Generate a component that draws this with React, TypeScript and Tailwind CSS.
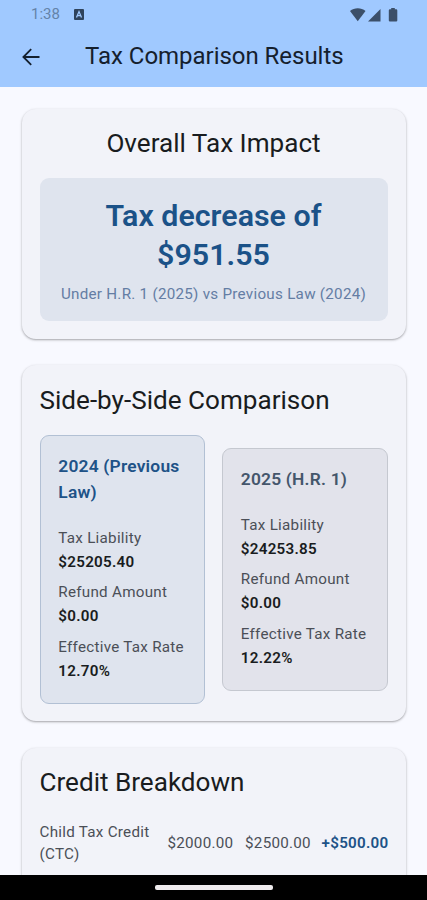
import type { ReactNode } from "react";
import clsx from "clsx";

interface Scenario {
  title: string;
  liability: string;
  refund: string;
  rate: string;
  previous?: boolean;
}

const scenarios: Scenario[] = [
  { title: "2024 (Previous Law)", liability: "$25205.40", refund: "$0.00", rate: "12.70%", previous: true },
  { title: "2025 (H.R. 1)", liability: "$24253.85", refund: "$0.00", rate: "12.22%" },
];

const credits = [
  { name: "Child Tax Credit (CTC)", before: "$2000.00", after: "$2500.00", change: "+$500.00" },
];

const StatusBar = () => (
  <div className="flex h-[29px] items-center justify-between pr-[29px] pl-[31px] text-[#3b4f69]">
    <div className="flex items-center">
      <span className="w-[43px] text-[15px] leading-none text-[#6483a9]">1:38</span>
      <svg width="10" height="11" viewBox="0 0 10 11">
        <rect width="10" height="11" rx="1" fill="#2f435c" />
        <path d="M2.5 8.4 5 2.6l2.5 5.8M3.6 6.7h2.8" fill="none" stroke="#a0c9ff" strokeWidth="1.3" />
      </svg>
    </div>
    <svg width="48" height="14" viewBox="0 0 48 14" fill="currentColor">
      <path d="M0 3.1C4.2-.7 11.3-.7 15.5 3.1L7.75 13.2Z" />
      <path d="M30.5 1V13.5H18Z" />
      <path d="M41.2 0h3.600v1.300h1.400q1.100 0 1.100 1.100v10q0 1.100-1.100 1.100h-6.300q-1.100 0-1.100-1.100v-10q0-1.100 1.100-1.100h1.300Z" />
    </svg>
  </div>
);

const AppBar = () => (
  <div className="flex h-[54px] items-center">
    <svg className="mt-[2px] ml-[22px] w-[18px]" height="18" viewBox="0 0 18 18" fill="none" stroke="#14202e" strokeWidth="1.8">
      <path d="M17.5 9H2M9.2 1.2 1.4 9l7.800 7.800" />
    </svg>
    <h1 className="-mt-px ml-[45px] text-[24px] leading-[30px] tracking-[-0.03px] whitespace-nowrap text-[#15202d]">
      Tax Comparison Results
    </h1>
  </div>
);

const Card = ({ children }: { children: ReactNode }) => (
  <section className="rounded-[14px] bg-[#f2f3f9] px-[18px] py-[17.5px] shadow-[0_1px_2px_rgba(0,0,0,0.28),0_1px_3px_1px_rgba(0,0,0,0.06)]">
    {children}
  </section>
);

const CardTitle = ({ children, center }: { children: ReactNode; center?: boolean }) => (
  <h2 className={clsx("text-[26.1px] leading-[35px] text-[#191c20]", center && "text-center")}>{children}</h2>
);

const Figure = ({ label, value }: { label: string; value: string }) => (
  <div className="py-[4.4px] text-[15.2px] leading-[21.8px] tracking-[0.27px] whitespace-nowrap">
    <div className="text-[#4b4f57]">{label}</div>
    <div className="mt-[2.2px] font-semibold text-[#191c20]">{value}</div>
  </div>
);

const ScenarioBox = ({ title, liability, refund, rate, previous }: Scenario) => (
  <div
    className={clsx(
      "flex-1 rounded-[9px] border pt-[17px] pr-[17px] pb-[15.8px] pl-[17.8px]",
      previous ? "border-[#b2c0d4] bg-[#dfe4ee]" : "border-[#c5c8d0] bg-[#e2e3eb]"
    )}
  >
    <h3
      className={clsx(
        "mb-[18px] text-[17.4px] leading-[26.1px] font-semibold tracking-[0.2px]",
        previous ? "text-[#205287]" : "text-[#44566b]"
      )}
    >
      {title}
    </h3>
    <Figure label="Tax Liability" value={liability} />
    <Figure label="Refund Amount" value={refund} />
    <Figure label="Effective Tax Rate" value={rate} />
  </div>
);

export default function App() {
  return (
    <div className="flex h-[900px] w-[427px] flex-col overflow-hidden bg-[#f8f9ff] font-[Roboto,sans-serif]">
      <header className="h-[87px] shrink-0 bg-[#a0c9ff]">
        <StatusBar />
        <AppBar />
      </header>

      <main className="flex min-h-0 flex-1 flex-col gap-[26.3px] overflow-hidden px-[21.5px] pt-[21.5px] *:shrink-0">
        <Card>
          <CardTitle center>Overall Tax Impact</CardTitle>
          <div className="mt-[17px] rounded-[9px] bg-[#dfe4ee] pt-[18px] pb-[15.8px] text-center">
            <p className="px-[40px] text-[30.4px] leading-[39.2px] font-semibold text-[#1b5288]">
              Tax decrease of $951.55
            </p>
            <p className="mt-[9.4px] text-[15.2px] leading-[21.8px] tracking-[0.27px] text-[#647da4]">
              Under H.R. 1 (2025) vs Previous Law (2024)
            </p>
          </div>
        </Card>

        <Card>
          <CardTitle>Side-by-Side Comparison</CardTitle>
          <div className="mt-[17.4px] flex items-center gap-[17px]">
            {scenarios.map((scenario) => (
              <ScenarioBox key={scenario.title} {...scenario} />
            ))}
          </div>
        </Card>

        <Card>
          <CardTitle>Credit Breakdown</CardTitle>
          {credits.map((credit) => (
            <div
              key={credit.name}
              className="mt-[18px] -mr-px grid grid-cols-[3fr_2fr_2fr_2fr] items-center py-[4.4px] text-right text-[15.2px] leading-[21.8px] tracking-[0.27px] text-[#4b4f57]"
            >
              <span className="text-left">{credit.name}</span>
              <span>{credit.before}</span>
              <span>{credit.after}</span>
              <span className="font-semibold text-[#205287]">{credit.change}</span>
            </div>
          ))}
        </Card>
      </main>

      <footer className="flex h-[25px] shrink-0 justify-center bg-black pt-[10px]">
        <div className="h-[5px] w-[118px] rounded-[2px] bg-[#eeebed]" />
      </footer>
    </div>
  );
}
